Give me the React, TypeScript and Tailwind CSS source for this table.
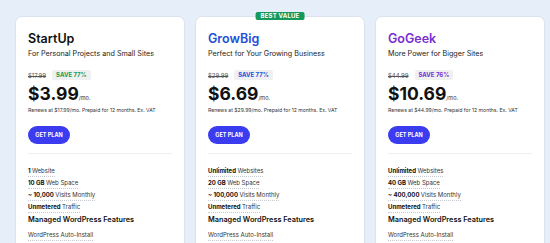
const font = { fontFamily: "Inter, 'Liberation Sans', sans-serif" };

interface Plan {
  name: string;
  tagline: string;
  oldPrice: string;
  save: string;
  price: string;
  renews: string;
  color: string;
  saveColor: string;
  sites: [string, string];
  space: string;
  visits: string;
  best?: boolean;
}

const plans: Plan[] = [
  {
    name: "StartUp",
    tagline: "For Personal Projects and Small Sites",
    oldPrice: "$17.99",
    save: "SAVE 77%",
    price: "$3.99",
    renews: "Renews at $17.99/mo. Prepaid for 12 months. Ex. VAT",
    color: "text-[#111111]",
    saveColor: "text-[#169a4f]",
    sites: ["1", "Website"],
    space: "10 GB",
    visits: "~ 10,000",
  },
  {
    name: "GrowBig",
    tagline: "Perfect for Your Growing Business",
    oldPrice: "$29.99",
    save: "SAVE 77%",
    price: "$6.69",
    renews: "Renews at $29.99/mo. Prepaid for 12 months. Ex. VAT",
    color: "text-[#1f4fd8]",
    saveColor: "text-[#1f4fd8]",
    sites: ["Unlimited", "Websites"],
    space: "20 GB",
    visits: "~ 100,000",
    best: true,
  },
  {
    name: "GoGeek",
    tagline: "More Power for Bigger Sites",
    oldPrice: "$44.99",
    save: "SAVE 76%",
    price: "$10.69",
    renews: "Renews at $44.99/mo. Prepaid for 12 months. Ex. VAT",
    color: "text-[#7a2fd0]",
    saveColor: "text-[#7a2fd0]",
    sites: ["Unlimited", "Websites"],
    space: "40 GB",
    visits: "~ 400,000",
  },
];

const Feature = ({ bold, rest }: { bold: string; rest: string }) => (
  <div className="h-[12px] flex items-start">
    <span className="border-b border-dotted border-[#c4c8cf] leading-[9px] pb-[1px] text-[6px] text-[#333] whitespace-nowrap">
      {bold && <span className="font-bold text-[#111]">{bold} </span>}
      {rest}
    </span>
  </div>
);

const PlanCard = ({ plan }: { plan: Plan }) => (
  <div className="relative w-[170px] h-[260px] bg-white border border-[#dbe3ee] rounded-[7px] px-[12px] pt-[13px]">
    {plan.best && (
      <div className="absolute -top-[5px] left-1/2 -translate-x-1/2 bg-[#17995a] text-white text-[6px] font-bold leading-[8px] px-[5px] rounded-[2px] tracking-[0.2px] whitespace-nowrap">
        BEST VALUE
      </div>
    )}
    <div className={`text-[12.5px] leading-[18px] font-semibold ${plan.color}`}>{plan.name}</div>
    <div className="text-[7.2px] leading-[10px] text-[#222] mt-[1px] whitespace-nowrap">{plan.tagline}</div>
    <div className="flex items-center gap-[6px] mt-[11px] h-[10px]">
      <span className="text-[6px] text-[#555] line-through">{plan.oldPrice}</span>
      <span className={`bg-[#eef0f2] text-[6px] font-bold px-[4px] leading-[10px] rounded-[2px] ${plan.saveColor}`}>
        {plan.save}
      </span>
    </div>
    <div className="flex items-baseline mt-[4px] h-[20px]">
      <span className="text-[17.5px] leading-[20px] font-bold text-[#111]">{plan.price}</span>
      <span className="text-[5.5px] text-[#333]">/mo.</span>
    </div>
    <div className="text-[5.1px] leading-[8px] text-[#333] mt-[2px] whitespace-nowrap">{plan.renews}</div>
    <div className="mt-[12px] w-[42px] h-[18px] rounded-full bg-[#3b3cf0] text-white text-[5.5px] font-bold flex items-center justify-center">
      GET PLAN
    </div>
    <div className="mt-[9px] border-t border-[#edf0f4]" />
    <div className="mt-[12px]">
      <Feature bold={plan.sites[0]} rest={plan.sites[1]} />
      <Feature bold={plan.space} rest="Web Space" />
      <Feature bold={plan.visits} rest="Visits Monthly" />
      <Feature bold="Unmetered" rest="Traffic" />
    </div>
    <div className="text-[7.3px] font-semibold text-[#111] leading-[10px] mt-[1px]">Managed WordPress Features</div>
    <div className="mt-[5px]">
      <Feature bold="" rest="WordPress Auto-Install" />
    </div>
  </div>
);

export default function App() {
  return (
    <div style={font} className="w-[550px] h-[243px] overflow-hidden bg-[#e6eefa] pt-[16px] pl-[15px]">
      <div className="flex gap-[10px]">
        {plans.map((p) => (
          <PlanCard key={p.name} plan={p} />
        ))}
      </div>
    </div>
  );
}
